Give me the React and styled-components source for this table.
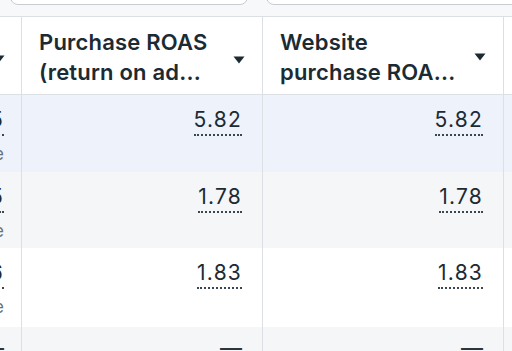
import React from "react";
import styled, { createGlobalStyle } from "styled-components";

const GlobalStyle = createGlobalStyle`
  html, body {
    margin: 0;
    padding: 0;
    background: #ffffff;
  }
  body {
    font-family: Inter, "Noto Sans", Roboto, sans-serif;
    color: #1c2b33;
  }
`;

const Page = styled.div`
  width: 512px;
  height: 351px;
  overflow: hidden;
  background: #ffffff;
`;

const TopBar = styled.div`
  height: 16px;
  display: flex;
  gap: 18px;
  padding-left: 10px;
  background: #f7f8f9;
  border-bottom: 1px solid #dcdfe3;
`;

const FilterBox = styled.div`
  width: ${p => p.width}px;
  height: 22px;
  margin-top: -19px;
  border: 1px solid #c9ccd1;
  border-radius: 8px;
  background: #ffffff;
  flex-shrink: 0;
`;

const Grid = styled.div`
  display: grid;
  grid-template-columns: 22px 241px 241px 1fr;
  grid-template-rows: 78px 77px 76px 79px 40px;
`;

const Cell = styled.div`
  border-right: 1px solid #dcdfe3;
  background: ${p => p.bg || "#ffffff"};
  overflow: hidden;
  box-sizing: border-box;
  &:last-child {
    border-right: none;
  }
`;

const HeadCell = styled(Cell)`
  display: flex;
  align-items: center;
  justify-content: space-between;
  padding: 2px 17px 0;
  border-bottom: 1px solid #dcdfe3;
`;

const HeadStub = styled(Cell)`
  display: flex;
  align-items: center;
  justify-content: flex-end;
  padding: 6px 16px 0 0;
  border-bottom: 1px solid #dcdfe3;
`;

const HeadTitle = styled.div`
  font-size: 22px;
  font-weight: 600;
  line-height: 30px;
  color: #1c2b33;
  letter-spacing: 0.2px;
  white-space: nowrap;
`;

const Caret = styled.svg`
  width: 12px;
  height: 8px;
  flex-shrink: 0;
  margin-top: ${p => p.$drop || 0}px;
`;

const ValueCell = styled(Cell)`
  display: flex;
  flex-direction: column;
  align-items: flex-end;
  padding: 11px 20px 0 0;
`;

const StubCell = styled(Cell)`
  display: flex;
  flex-direction: column;
  align-items: flex-end;
  padding: 11px 17px 0 0;
  white-space: nowrap;
`;

const Value = styled.span`
  font-size: 21px;
  font-weight: 400;
  letter-spacing: 1.2px;
  line-height: 28px;
  color: #1c2b33;
  border-bottom: 2px dotted #3a4650;
  white-space: nowrap;
`;

const SubLabel = styled.span`
  font-size: 17px;
  line-height: 28px;
  color: #67737b;
  margin-top: 4px;
  white-space: nowrap;
`;

const Dash = styled.span`
  font-size: 22px;
  line-height: 20px;
  font-weight: 500;
  color: #2a353d;
  margin-top: 0;
`;

const CaretIcon = ({ drop }) => (
  <Caret viewBox="0 0 12 8" $drop={drop}>
    <path d="M0.5 0.5 L11.5 0.5 L6 7.5 Z" fill="#1c2b33" />
  </Caret>
);

const rows = [
  { bg: "#edf2fb", stub: "$25.45", values: ["5.82", "5.82"] },
  { bg: "#f5f6f7", stub: "$83.15", values: ["1.78", "1.78"] },
  { bg: "#ffffff", stub: "$80.96", values: ["1.83", "1.83"] },
  { bg: "#f5f6f7", dash: true },
];

const App = () => (
  <Page>
    <GlobalStyle />
    <TopBar>
      <FilterBox width={236} />
      <FilterBox width={260} />
    </TopBar>
    <Grid>
      <HeadStub>
        <CaretIcon />
      </HeadStub>
      <HeadCell>
        <HeadTitle>
          Purchase ROAS
          <br />
          (return on ad...
        </HeadTitle>
        <CaretIcon drop={6} />
      </HeadCell>
      <HeadCell>
        <HeadTitle>
          Website
          <br />
          purchase ROA...
        </HeadTitle>
        <CaretIcon />
      </HeadCell>
      <HeadStub />
      {rows.map((row, i) => (
        <React.Fragment key={i}>
          <StubCell bg={row.bg}>
            {row.dash ? (
              <Dash>—</Dash>
            ) : (
              <>
                <Value>{row.stub}</Value>
                <SubLabel>Per Purchase</SubLabel>
              </>
            )}
          </StubCell>
          {[0, 1].map(c => (
            <ValueCell key={c} bg={row.bg}>
              {row.dash ? <Dash>—</Dash> : <Value>{row.values[c]}</Value>}
            </ValueCell>
          ))}
          <Cell bg={row.bg} />
        </React.Fragment>
      ))}
    </Grid>
  </Page>
);

export default App;
